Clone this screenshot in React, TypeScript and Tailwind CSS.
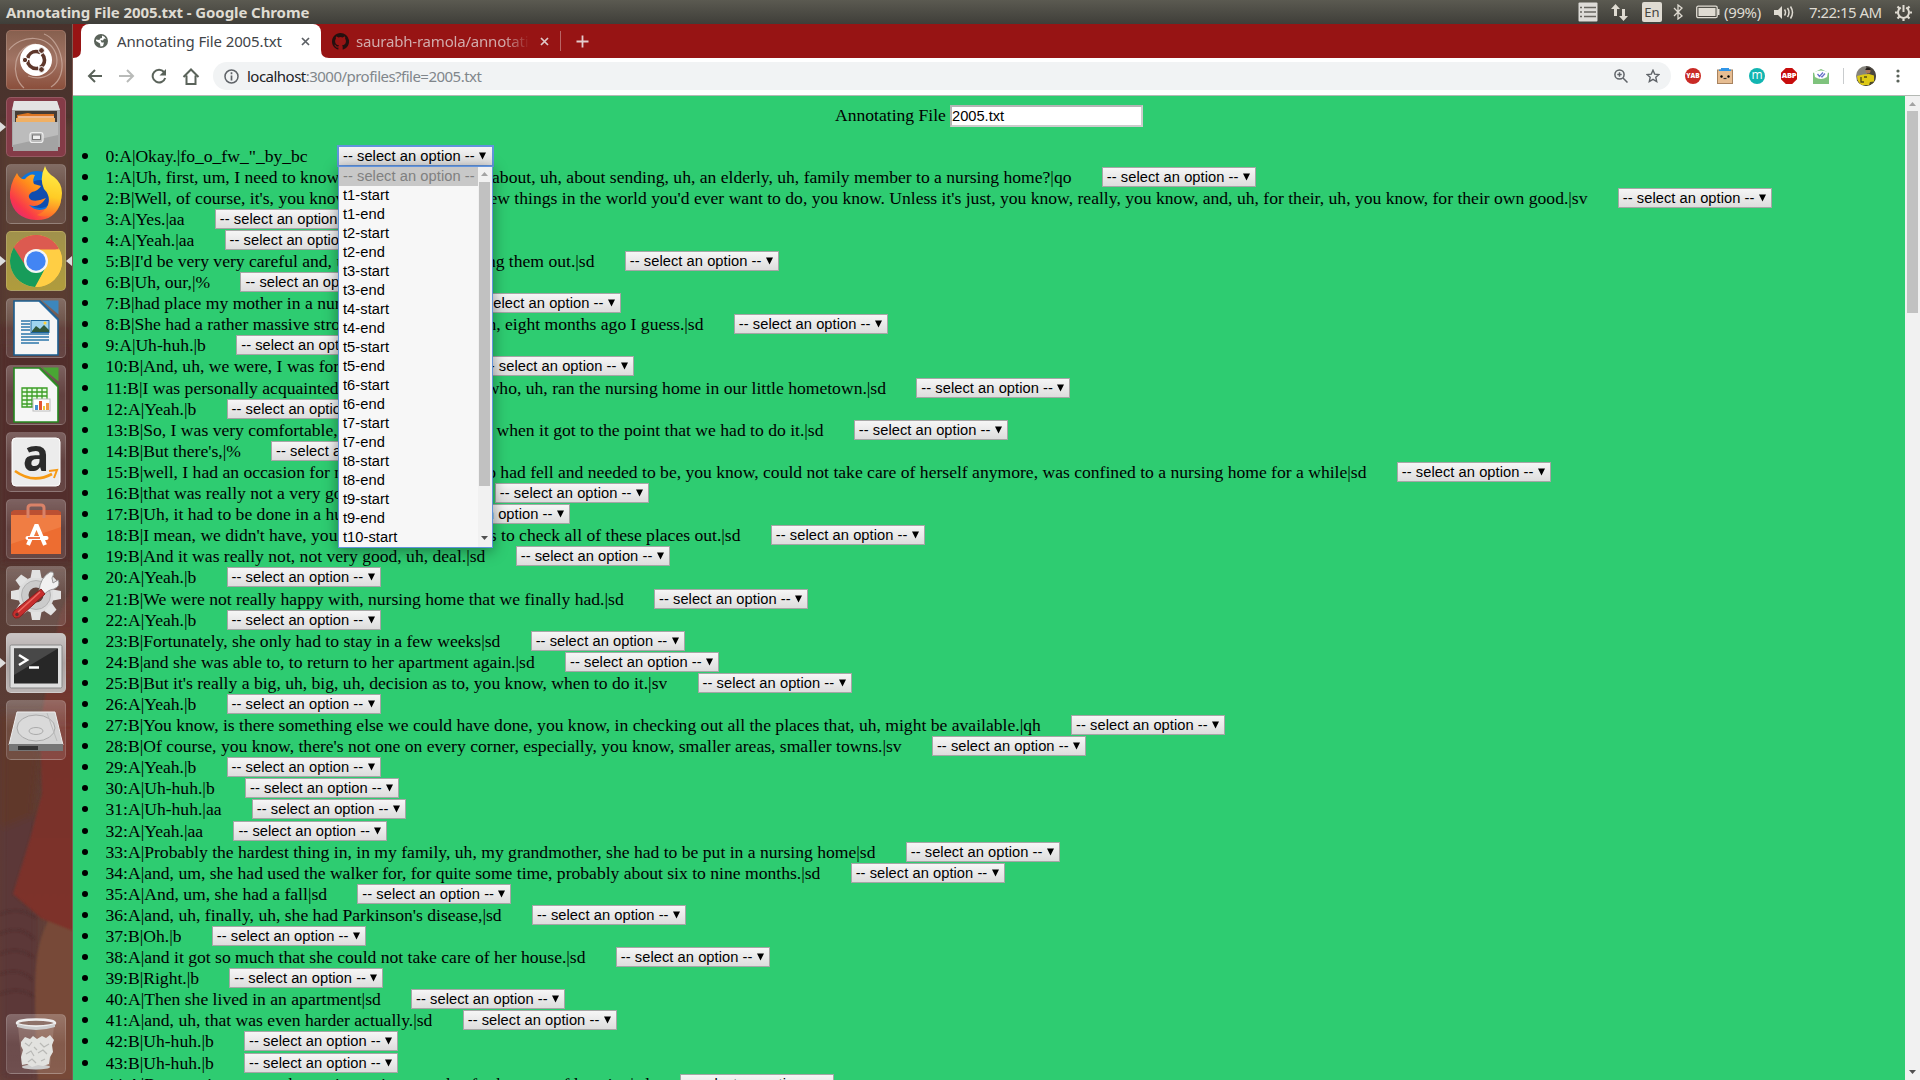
import React from "react";

type Row = { text: string; tail?: string; width?: number };

const rows: Row[] = [
  { text: '0:A|Okay.|fo_o_fw_"_by_bc' },
  { text: "1:A|Uh, first, um, I need to know, uh, how do you feel ", tail: "about, uh, about sending, uh, an elderly, uh, family member to a nursing home?|qo", width: 966 },
  { text: "2:B|Well, of course, it's, you know, one of the last ", tail: "few things in the world you'd ever want to do, you know. Unless it's just, you know, really, you know, and, uh, for their, uh, you know, for their own good.|sv", width: 1482 },
  { text: "3:A|Yes.|aa" },
  { text: "4:A|Yeah.|aa" },
  { text: "5:B|I'd be very very careful and, uh, you know, ", tail: "checking them out.|sd", width: 489 },
  { text: "6:B|Uh, our,|%" },
  { text: "7:B|had place my mother in a nursing home.|sd", tail: "", width: 331 },
  { text: "8:B|She had a rather massive stroke about, uh, ", tail: "uh, eight months ago I guess.|sd", width: 598 },
  { text: "9:A|Uh-huh.|b" },
  { text: "10:B|And, uh, we were, I was fortunate in that|sd", tail: "", width: 344 },
  { text: "11:B|I was personally acquainted with the, uh, ", tail: "who, uh, ran the nursing home in our little hometown.|sd", width: 780.5 },
  { text: "12:A|Yeah.|b" },
  { text: "13:B|So, I was very comfortable, you know, in it ", tail: "when it got to the point that we had to do it.|sd", width: 718 },
  { text: "14:B|But there's,|%" },
  { text: "15:B|well, I had an occasion for my mother-in-law ", tail: "who had fell and needed to be, you know, could not take care of herself anymore, was confined to a nursing home for a while|sd", width: 1261 },
  { text: "16:B|that was really not a very good experience.|sd", tail: "", width: 359 },
  { text: "17:B|Uh, it had to be done in a hurry.|sd", tail: "", width: 280 },
  { text: "18:B|I mean, we didn't have, you know, six ", tail: "months to check all of these places out.|sd", width: 635 },
  { text: "19:B|And it was really not, not very good, uh, deal.|sd" },
  { text: "20:A|Yeah.|b" },
  { text: "21:B|We were not really happy with, nursing home that we finally had.|sd" },
  { text: "22:A|Yeah.|b" },
  { text: "23:B|Fortunately, she only had to stay in a few weeks|sd" },
  { text: "24:B|and she was able to, to return to her apartment again.|sd" },
  { text: "25:B|But it's really a big, uh, big, uh, decision as to, you know, when to do it.|sv" },
  { text: "26:A|Yeah.|b" },
  { text: "27:B|You know, is there something else we could have done, you know, in checking out all the places that, uh, might be available.|qh" },
  { text: "28:B|Of course, you know, there's not one on every corner, especially, you know, smaller areas, smaller towns.|sv" },
  { text: "29:A|Yeah.|b" },
  { text: "30:A|Uh-huh.|b" },
  { text: "31:A|Uh-huh.|aa" },
  { text: "32:A|Yeah.|aa" },
  { text: "33:A|Probably the hardest thing in, in my family, uh, my grandmother, she had to be put in a nursing home|sd" },
  { text: "34:A|and, um, she had used the walker for, for quite some time, probably about six to nine months.|sd" },
  { text: "35:A|And, um, she had a fall|sd" },
  { text: "36:A|and, uh, finally, uh, she had Parkinson's disease,|sd" },
  { text: "37:B|Oh.|b" },
  { text: "38:A|and it got so much that she could not take care of her house.|sd" },
  { text: "39:B|Right.|b" },
  { text: "40:A|Then she lived in an apartment|sd" },
  { text: "41:A|and, uh, that was even harder actually.|sd" },
  { text: "42:B|Uh-huh.|b" },
  { text: "43:B|Uh-huh.|b" },
  { text: "44:A|Because it was, you know, it was just, you know, ", tail: "for her, use of location|sd", width: 544 },
];

const options = Array.from({ length: 10 }, (_, i) => [`t${i + 1}-start`, `t${i + 1}-end`]).flat().slice(0, 19);

function Select({ open }: { open?: boolean }) {
  return (
    <span
      className={
        "relative flex h-[20px] w-[154px] shrink-0 items-center bg-linear-to-b from-[#f6f6f6] to-[#dddddd] font-['Liberation_Sans',sans-serif] text-[14.67px] leading-[18px] tracking-[0.06px] whitespace-nowrap text-black " +
        (open ? "w-[155px] pl-[5px] outline outline-2 -outline-offset-1 outline-[#6294dc]" : "border border-[#a6a6a6] pl-[4px]")
      }
    >
      <span className="w-[136px]">-- select an option --</span>
      <svg width="7" height="8" viewBox="0 0 7 8"><path d="M0 0.5h7L3.5 7.5z" fill="#000" /></svg>
      {open && <Popup />}
    </span>
  );
}

function Popup() {
  return (
    <span className="absolute top-[20px] left-0 z-10 flex h-[382px] w-[155px] border border-[#6294dc] bg-[#f7f7f7] shadow-[0_3px_14px_rgba(0,0,0,0.4)]">
      <span className="flex w-[139px] flex-col whitespace-nowrap">
        <span className="h-[19px] shrink-0 bg-[#c8c8c8] pl-[4px] leading-[19px] text-[#808080]">-- select an option --</span>
        {options.map((o) => (
          <span key={o} className="h-[19px] shrink-0 pl-[4px] leading-[19px]">{o}</span>
        ))}
      </span>
      <span className="flex w-[14px] flex-col items-center bg-[#f1f1f1]">
        <span className="flex h-[15px] items-center"><svg width="7" height="4"><path d="M3.5 0L7 4H0z" fill="#a3a3a3" /></svg></span>
        <span className="h-[304px] w-[11px] bg-[#c1c1c1]" />
        <span className="mt-auto flex h-[17px] items-center"><svg width="7" height="4"><path d="M0 0h7L3.5 4z" fill="#505050" /></svg></span>
      </span>
    </span>
  );
}

function Tile({ bg, left, right, children }: { bg: string; left?: boolean; right?: boolean; children: React.ReactNode }) {
  return (
    <div className={"relative flex h-[60px] w-[60px] shrink-0 items-center justify-center rounded-[5px] border border-white/15 " + bg}>
      {left && <svg className="absolute top-[23px] -left-[7px]" width="6" height="12"><path d="M0 1L6 6L0 11z" fill="#ddd" /></svg>}
      {right && <svg className="absolute top-[23px] -right-[7px]" width="6" height="12"><path d="M6 1L0 6L6 11z" fill="#ddd" /></svg>}
      <svg width="58" height="58" viewBox="1 1 58 58" className="block">{children}</svg>
    </div>
  );
}

const glass = "bg-linear-to-b from-white/25 via-white/10 to-white/12";

function Doc({ c, c2, fold }: { c: string; c2: string; fold: string }) {
  return (
    <>
      <path d="M8 3h26l18 18v36H8z" fill="#f6f6f6" stroke={c} strokeWidth="1.6" />
      <path d="M36 2.5h16.5v14z" fill={fold} />
      <path d="M33 3L52 22" stroke={c2} strokeWidth="1.5" />
    </>
  );
}

function Launcher() {
  return (
    <aside className="relative flex h-[1056px] w-[73px] shrink-0 flex-col gap-[7px] overflow-hidden border-r border-[#805a52] bg-linear-to-b from-[#49322c] via-[#563a33] to-[#67443c] pt-[6px] pl-[6px]">
      <svg className="absolute inset-0" width="73" height="1056">
        <defs>
          <filter id="soft"><feGaussianBlur stdDeviation="4" /></filter>
          <filter id="edge"><feGaussianBlur stdDeviation="1" /></filter>
          <linearGradient id="cloth" x1="0" x2="0" y1="0" y2="1"><stop offset="0" stopColor="#7d3730" stopOpacity="0.3" /><stop offset=".5" stopColor="#78332b" /><stop offset="1" stopColor="#7e3229" /></linearGradient>
        </defs>
        <g filter="url(#soft)">
          <rect x="0" y="100" width="73" height="220" fill="#5f4132" opacity=".6" />
          <rect x="0" y="300" width="73" height="240" fill="#532b28" opacity=".7" />
          <path d="M0 690h45L30 830L0 825z" fill="#60392a" />
          <path d="M0 805l38-16v267H0z" fill="#5b3837" />
        </g>
        <g filter="url(#edge)">
          <path d="M73 560L60 590L40 700L42 770L30 815L13 870L42 895L73 908z" fill="url(#cloth)" />
          <path d="M48 897C32 930 34 960 38 1056H73V907z" fill="#774a38" />
          <path d="M0 890q20-8 36 4M0 910q20-10 34 5M0 930q18-8 33 3M0 950q20-7 33 6M0 970q20-8 35 3" fill="none" stroke="#492c2c" strokeWidth="2" opacity=".5" />
        </g>
      </svg>
      <Tile bg="bg-linear-to-b from-[#87604f] via-[#a17464] to-[#8b4f3c]">
        <path d="M3 20C15 4 43 4 50 24C55 42 38 52 22 46M18 58C3 45 8 15 30 14M45 57C65 45 55 10 38 4" fill="none" stroke="#d2b5a9" strokeWidth="1.2" opacity=".7" />
        <circle cx="30" cy="30" r="16" fill="#fff" />
        <circle cx="30" cy="30" r="8.5" fill="none" stroke="#5e372b" strokeWidth="3.6" strokeDasharray="15.8 2" strokeDashoffset="7" />
        <circle cx="19" cy="30" r="2.7" fill="#5e372b" stroke="#fff" strokeWidth="1" /><circle cx="35.5" cy="20.5" r="2.9" fill="#5e372b" stroke="#fff" strokeWidth="1" /><circle cx="35.5" cy="39.5" r="2.9" fill="#5e372b" stroke="#fff" strokeWidth="1" />
      </Tile>
      <Tile bg="bg-[#843b47]" left>
        <path d="M8 4h43l3 10v36H6V14z" fill="#a9a9a9" /><path d="M8 4h43l3 9H6z" fill="#e3e3e3" />
        <rect x="9" y="14" width="42" height="12" fill="#453c35" /><path d="M11 18l11-2 4 1h22v10H11z" fill="#dd7623" /><path d="M10 21h39v6H10z" fill="#f0b064" /><path d="M12 20h36" stroke="#fff" strokeWidth="1" />
        <rect x="7" y="25" width="45" height="29" fill="#a3a3a3" /><path d="M7 25h45v13L7 48z" fill="#bcbcbc" />
        <rect x="24" y="35.500" width="13" height="10" rx="2.5" fill="#bbb" stroke="#eee" strokeWidth="1.2" /><rect x="26.500" y="38" width="8" height="4.500" fill="#eee" stroke="#777" />
      </Tile>
      <Tile bg={glass}>
        <defs>
          <linearGradient id="fx" x1="1" y1="0" x2="0" y2="1"><stop offset="0" stopColor="#ffe42e" /><stop offset=".45" stopColor="#ff8b1b" /><stop offset=".75" stopColor="#f9374b" /><stop offset="1" stopColor="#d5208d" /></linearGradient>
          <linearGradient id="fy" x1=".5" y1="0" x2=".4" y2="1"><stop offset="0" stopColor="#fff14a" /><stop offset=".6" stopColor="#ffcb25" /><stop offset="1" stopColor="#ff6d2a" /></linearGradient>
        </defs>
        <circle cx="31" cy="28" r="21" fill="#0d75dc" /><circle cx="34" cy="30" r="14" fill="#123c9b" opacity=".7" />
        <path d="M11 9Q14 16 19 15Q24 9 29 11Q26 16 28 20L35 22Q32 27 26 28Q20 32 25 36Q31 38 40 34Q33 45 23 41Q31 49 41 44Q54 34 45 20Q58 28 54 41Q47 57 30 56Q8 55 4 34Q3 21 11 9z" fill="url(#fx)" />
        <path d="M39 2Q33 15 38 25Q45 32 42 41Q39 48 31 51Q47 57 54 40Q60 22 48 13Q41 9 39 2z" fill="url(#fy)" />
      </Tile>
      <Tile bg="bg-linear-to-b from-[#a0914c] to-[#b09c3c]" left right>
        <circle cx="30" cy="30" r="26" fill="#ffce44" />
        <path d="M30 30L7.500 17A26 26 0 0 1 52.500 17z" fill="#dc5648" /><path d="M30 18.500H53A26 26 0 0 0 7.500 17L20 36z" fill="#dc5a50" />
        <path d="M20 35.500L7.800 16.500A26 26 0 0 0 29 56L40 36z" fill="#179c5a" />
        <path d="M30 56A26 26 0 0 0 53.500 18.500H30L40 36z" fill="#ffce44" />
        <circle cx="30" cy="30" r="12" fill="#f5f5f5" /><circle cx="30" cy="30" r="9.700" fill="#4285f4" />
      </Tile>
      <Tile bg={glass}>
        <Doc c="#1b5d8e" c2="#2469a0" fold="#3c87bd" />
        <path d="M15 23h9M15 26h9M15 29h9M15 32h9M15 36h28M15 39h28M15 42h28M15 45h18" stroke="#2d77aa" strokeWidth="1.3" />
        <rect x="25" y="22.500" width="18" height="12" fill="#9fd4ef" stroke="#1e649b" /><path d="M26 33l4-5 4 3 4-4 5 5v2H26z" fill="#31583c" /><circle cx="39" cy="25" r="1.5" fill="#ffd23a" />
      </Tile>
      <Tile bg={glass}>
        <Doc c="#24881e" c2="#32922a" fold="#49a634" />
        <rect x="16" y="23" width="25" height="19" fill="#eaf9e4" /><path d="M16 23h25v19H16zM16 27h25M16 31h25M16 35h25M16 39h25M21 23v19M26 23v19M31 23v19M36 23v19" fill="none" stroke="#3b9d25" strokeWidth="1.300" />
        <rect x="27" y="34" width="17" height="12" fill="#fff" stroke="#bbb" /><path d="M29 45v-5h3v5z" fill="#4a8ed0" /><path d="M33 45v-9h3v9z" fill="#e45632" /><path d="M37 45v-4h2v4z" fill="#efca36" /><path d="M40 45v-7h3v7z" fill="#ef9b45" />
      </Tile>
      <Tile bg={glass}>
        <rect x="6" y="6" width="48" height="48" rx="4" fill="#ececec" stroke="#fff" />
        <text x="30" y="38.500" textAnchor="middle" fontFamily="Open Sans" fontWeight="700" fontSize="44" fill="#2b2b2b">a</text>
        <path d="M9 39Q27 52 46 42" fill="none" stroke="#f79a13" strokeWidth="2.600" /><path d="M43 39l8-1-3 8" fill="none" stroke="#f79a13" strokeWidth="2" />
      </Tile>
      <Tile bg={glass}>
        <path d="M5 13l3-2h44l3 2v6H5z" fill="#bb5032" /><rect x="5" y="16" width="50" height="39" fill="#ed6d31" /><path d="M5 16h50v12L5 45z" fill="#f18850" opacity=".6" />
        <path d="M22 19V9q0-3 3-3h10q3 0 3 3v10" fill="none" stroke="#d98268" strokeWidth="3" />
        <path d="M22 46l8-19h1l8 19" fill="none" stroke="#fff" strokeWidth="4" /><path d="M21.500 39h19" stroke="#fff" strokeWidth="4" strokeLinecap="round" /><path d="M22 39h12" stroke="#e95520" strokeWidth="1.6" />
      </Tile>
      <Tile bg={glass}>
        <circle cx="30" cy="29" r="18" fill="#dcdcdc" />
        {[0, 45, 90, 135, 180, 225, 270, 315].map((a) => (
          <path key={a} d="M24.500 12L26 4h8l1.500 8z" fill="#e2e2e2" transform={`rotate(${a} 30 29)`} />
        ))}
        <circle cx="30" cy="29" r="14.500" fill="#cbcbcb" stroke="#b2b2b2" /><circle cx="30" cy="29" r="7.500" fill="#5d4039" />
        <path d="M33 25Q34 12 44 6Q50 5 46 12L47 17L52 14Q55 20 48 23Q41 24 37 30z" fill="#f1f1f1" stroke="#999" />
        <path d="M35 23L8 45Q5 49 9 52Q13 53 16 49L39 28z" fill="#c72d2d" stroke="#872020" /><path d="M34 26L12 46" stroke="#ed6a62" strokeWidth="1.500" /><circle cx="11" cy="48.500" r="1.700" fill="#5c3030" />
      </Tile>
      <Tile bg="bg-linear-to-b from-[#c9c4c4] via-[#aaa2a1] to-[#bbb5b4]" left>
        <rect x="4" y="12" width="52" height="43" rx="1.500" fill="#dedede" stroke="#888" /><rect x="8" y="15.500" width="44" height="35" fill="#272727" /><path d="M8 15.500h44L8 42z" fill="#484848" />
        <path d="M13 22l8 5-8 5" fill="none" stroke="#fff" strokeWidth="2.500" /><path d="M23 34.500h10" stroke="#fff" strokeWidth="2.500" />
      </Tile>
      <Tile bg={glass}>
        <path d="M11 12h38l8 33H3z" fill="#d2d2d2" stroke="#eee" /><path d="M3 44h54v7H3z" fill="#767676" /><path d="M12 46h20v4H12z" fill="#333" />
        <ellipse cx="30" cy="28" rx="19" ry="13" fill="#dadada" stroke="#aaa" /><ellipse cx="30" cy="31" rx="7" ry="3.500" fill="none" stroke="#aaa" /><path d="M41 13L51 41" stroke="#bbb" />
      </Tile>
      <div className="mt-auto mb-[6px] h-[60px]">
        <Tile bg={glass}>
          <path d="M12 12l4 41h28l4-41z" fill="#b99e92" opacity=".35" /><ellipse cx="30" cy="53" rx="14" ry="2.500" fill="#ccc" />
          <path d="M15 28l4-5 5 2 3-3 4 3 5-3 4 2 4-3 4 5-2 5 1 7-3 5-1 7-6 2-5-1-6 2-5-3-5 1-1-8 2-7-2-4z" fill="#e2e2df" />
          <path d="M19 29l4 3 3-4M34 29l4 4 5-3M20 40l5-3 3 5M32 39l5-3 4 4M22 48l4-3 4 4M35 47l4-2M28 33l3 3" fill="none" stroke="#b9b9b6" strokeWidth="1.200" />
          <ellipse cx="30" cy="9" rx="19" ry="3.500" fill="#8e7269" stroke="#eee" strokeWidth="2.500" /><path d="M11 10v3q19 6 38 0v-3q-19 6-38 0" fill="#cdcdcd" />
        </Tile>
      </div>
    </aside>
  );
}

function TitleBar() {
  return (
    <header className="flex h-[24px] items-center justify-between bg-linear-to-b from-[#5b5a51] to-[#3f3e39] text-[#dfdbd2]">
      <span className="pl-[6px] font-['Noto_Sans',sans-serif] text-[15px] leading-[23px] font-bold tracking-[-0.09px] whitespace-nowrap">Annotating File 2005.txt - Google Chrome</span>
      <div className="flex items-center font-['Noto_Sans',sans-serif] text-[15px] leading-[23px]">
        <svg width="20" height="20" viewBox="0 0 20 20"><rect x="0.500" y="0.500" width="19" height="19" rx="1" fill="#dedcd8" /><path d="M2 5.500h2M2 10h2M2 14.500h2M6 5.500h12M6 10h12M6 14.500h12" stroke="#686660" strokeWidth="1.700" /></svg>
        <svg className="ml-[13px]" width="17" height="17" viewBox="0 0 17 17" fill="#dfdbd2"><path d="M4.500 0l4.500 5H6v7H3V5H0zM12.500 17L8 12h3V5h3v7h3z" /></svg>
        <span className="ml-[14px] flex h-[20px] w-[20px] items-center justify-center rounded-[2px] bg-[#dfdbd2] text-[13px] text-[#45443f]">En</span>
        <svg className="ml-[11px]" width="10" height="16" viewBox="0 0 10 16" fill="none" stroke="#dfdbd2" strokeWidth="1.300"><path d="M1 4l8 8-4 3V1l4 3-8 8" /></svg>
        <svg className="ml-[13px]" width="24" height="14" viewBox="0 0 24 14"><rect x="0.700" y="1.200" width="20.500" height="11.500" rx="1.500" fill="none" stroke="#dfdbd2" strokeWidth="1.300" /><rect x="2.500" y="3" width="17" height="8" fill="#dfdbd2" /><path d="M22.500 4v6" stroke="#dfdbd2" strokeWidth="2" /></svg>
        <span className="ml-[4px] w-[39px] tracking-[-0.35px] whitespace-nowrap">(99%)</span>
        <svg className="ml-[11px]" width="20" height="15" viewBox="0 0 20 15"><path d="M0 5h4l4-4v13l-4-4H0z" fill="#dfdbd2" /><path d="M10.500 4.500q2 3 0 6M13.500 3q3 4.500 0 9M16.500 1.500q4 6 0 12" fill="none" stroke="#dfdbd2" strokeWidth="1.500" /></svg>
        <span className="ml-[15px] w-[76px] tracking-[-0.55px] whitespace-nowrap">7:22:15 AM</span>
        <svg className="mr-[8px] ml-[10px]" width="17" height="17" viewBox="0 0 17 17" fill="none" stroke="#dfdbd2"><path d="M5.800 3.600a5.500 5.500 0 1 0 5.400 0" strokeWidth="2" /><path d="M8.500 1v7" strokeWidth="2" /><path d="M0 8.500h2.500M14.500 8.500H17M8.500 14.500V17M2.500 2.500l2 2M14.500 2.500l-2 2M2.500 14.500l2-2M14.500 14.500l-2-2" strokeWidth="2.200" /></svg>
      </div>
    </header>
  );
}

const X = ({ c }: { c: string }) => (
  <svg width="9" height="9" viewBox="0 0 9 9" className="shrink-0"><path d="M1 1l7 7M8 1L1 8" stroke={c} strokeWidth="1.700" /></svg>
);

function Tabs() {
  return (
    <div className="flex h-[34px] items-center bg-[#971414] font-['Noto_Sans',sans-serif] text-[15px]">
      <svg className="self-end" width="8" height="8"><path d="M8 0v8H0Q8 8 8 0z" fill="#fff" /></svg>
      <div className="flex h-[34px] w-[240px] shrink-0 items-center rounded-t-[8px] bg-white pl-[13px]">
        <svg width="14" height="14" viewBox="0 0 14 14"><circle cx="7" cy="7" r="7" fill="#5a635a" /><path d="M8 1.500Q11 2 12 5L10 4.500L9 6.500L6.500 6L7.500 8.500H10L9 12L6.500 12.500L6 9.500L2 7V5.500L5.500 6L6 4.500L8 4z" fill="#fff" /></svg>
        <span className="ml-[9px] w-[168px] leading-[32px] tracking-[-0.12px] whitespace-nowrap text-[#3f4448]">Annotating File 2005.txt</span>
        <span className="ml-[16px] flex"><X c="#5c6065" /></span>
      </div>
      <svg className="self-end" width="8" height="8"><path d="M0 0v8H8Q0 8 0 0z" fill="#fff" /></svg>
      <svg className="ml-[3px]" width="17" height="17" viewBox="0 0 16 16"><path fill="#24100f" d="M8 0C3.580 0 0 3.580 0 8c0 3.540 2.290 6.530 5.470 7.590.4.070.55-.17.55-.38v-1.490c-2.010.37-2.530-.49-2.690-.94-.09-.23-.48-.94-.82-1.130-.28-.15-.68-.52-.01-.53.63-.01 1.080.58 1.230.82.72 1.210 1.870.87 2.330.66.070-.52.28-.87.51-1.070-1.780-.2-3.640-.89-3.640-3.950 0-.87.31-1.590.82-2.150-.08-.2-.36-1.020.08-2.120 0 0 .67-.21 2.200.82a7.600 7.600 0 0 1 4 0c1.530-1.040 2.200-.82 2.200-.82.44 1.100.16 1.920.08 2.120.51.56.82 1.270.82 2.150 0 3.070-1.870 3.750-3.650 3.950.29.25.54.73.54 1.480v2.200c0 .21.150.46.550.38A8 8 0 0 0 8 0z" /></svg>
      <span className="ml-[7px] w-[174px] overflow-hidden mask-r-from-85% leading-[32px] tracking-[-0.2px] whitespace-nowrap text-[#d2abab]">saurabh-ramola/annotati</span>
      <span className="ml-[10px] flex"><X c="#e0c8c8" /></span>
      <span className="ml-[11px] h-[20px] w-px bg-[#b96565]" />
      <svg className="ml-[15px]" width="13" height="13"><path d="M6.500 0.500v12M0.500 6.500h12" stroke="#e4cccc" strokeWidth="1.800" /></svg>
    </div>
  );
}

function Toolbar() {
  return (
    <div className="flex h-[38px] items-center border-b border-[#b4b9b4] bg-white pb-px pl-[14px]">
      <svg width="16" height="14" viewBox="0 0 16 14" fill="none" stroke="#5a635a" strokeWidth="2"><path d="M15 7H2M8 1L2 7l6 6" /></svg>
      <svg className="ml-[16px]" width="16" height="14" viewBox="0 0 16 14" fill="none" stroke="#b9bbb9" strokeWidth="2"><path d="M0 7h13M8 1l6 6-6 6" /></svg>
      <svg className="ml-[16px]" width="16" height="16" viewBox="0 0 16 16"><path d="M13 4A6.400 6.400 0 1 0 14.200 10" fill="none" stroke="#5a635a" strokeWidth="2" /><path d="M15 1v6.500H8.500z" fill="#5a635a" /></svg>
      <svg className="ml-[15px]" width="18" height="17" viewBox="0 0 18 17" fill="none" stroke="#5a635a" strokeWidth="2"><path d="M1.500 9L9 1.500L16.500 9M4.500 7.500V16h9V7.500" /></svg>
      <div className="ml-[13px] flex h-[28px] w-[1458px] items-center rounded-full bg-[#f1f3f4] pl-[11px] font-['Noto_Sans',sans-serif] text-[15px]">
        <svg width="15" height="15" viewBox="0 0 15 15" fill="none" stroke="#5f6368"><circle cx="7.500" cy="7.500" r="6.500" strokeWidth="1.500" /><path d="M7.500 6.500v5M7.500 3.300v1.900" strokeWidth="1.700" /></svg>
        <span className="ml-[8px] leading-[26px] tracking-[-0.52px] whitespace-nowrap text-[#202124]">localhost<span className="text-[#80868b]">:3000/profiles?file=2005.txt</span></span>
        <svg className="ml-auto" width="14" height="14" viewBox="0 0 14 14" fill="none" stroke="#5f6368" strokeWidth="1.500"><circle cx="5.500" cy="5.500" r="4.600" /><path d="M9 9l4.500 4.500M3.300 5.500h4.400M5.500 3.300v4.400" /></svg>
        <svg className="mr-[11px] ml-[18px]" width="14" height="14" viewBox="0 0 14 14" fill="none" stroke="#5f6368" strokeWidth="1.400"><path d="M7 1.200l1.700 3.900 4.300.4-3.200 2.800.9 4.200L7 10.300l-3.700 2.200.9-4.200L1 5.500l4.300-.4z" /></svg>
      </div>
      <div className="ml-[14px] flex items-center gap-[16px] font-['Open_Sans',sans-serif] font-extrabold text-white">
        <span className="flex h-[16px] w-[16px] items-center justify-center rounded-full bg-[#c92a25] text-[6.5px]">YAB</span>
        <svg width="16" height="16" viewBox="0 0 16 16"><rect x="0.500" y="2" width="15" height="13.500" fill="#e6bd92" stroke="#a8835f" /><path d="M4 0h8v1.500h2V3H2V1.500h2z" fill="#2f95e8" /><circle cx="4.500" cy="8.500" r="1.200" /><circle cx="11.500" cy="8.500" r="1.200" /><path d="M6.500 10.500h3" stroke="#333" strokeWidth="1.200" /></svg>
        <span className="flex h-[16px] w-[16px] items-center justify-center rounded-full bg-[#12b5b1] pb-[2px] text-[12px] font-normal">m</span>
        <span className="flex h-[16px] w-[16px] items-center justify-center bg-[#c70d0d] text-[7.5px] tracking-[-0.3px] [clip-path:polygon(30%_0,70%_0,100%_30%,100%_70%,70%_100%,30%_100%,0_70%,0_30%)]">ABP</span>
        <svg width="16" height="15" viewBox="0 0 16 15"><path d="M0 4l8-4 8 4v11H0z" fill="#7fc37d" /><path d="M1 3Q8 0 15 3L14 8Q8 12 2 8z" fill="#fff" /><path d="M4.500 5l2 2.500L10 3.500M8 7.500l1 .500L12 4.500" fill="none" stroke="#6973c9" strokeWidth="1.300" /></svg>
      </div>
      <span className="ml-[14px] h-[16px] w-px bg-[#c9ccce]" />
      <svg className="ml-[12px]" width="20" height="20" viewBox="0 0 20 20"><defs><clipPath id="av"><circle cx="10" cy="10" r="10" /></clipPath></defs><g clipPath="url(#av)"><path d="M0 0h20v20H0z" fill="#85837c" /><path d="M10 0h10v20H13z" fill="#4b4740" /><path d="M0 14h20v6H0z" fill="#4d4a2c" /><circle cx="12" cy="5" r="2.500" fill="#a8775b" /><path d="M9.500 3q2.500-3 5 0v1h-5z" fill="#221d1a" /><path d="M1 10l6-1.500 6-.5 5 1.500v6l-4 .5-1 3H5L2 15z" fill="#ddc916" /><path d="M5 11v5h3M8 11h3" stroke="#514b1a" fill="none" strokeWidth="1.300" /></g></svg>
      <svg className="ml-[20px]" width="4" height="14" fill="#5a635a"><circle cx="2" cy="2" r="1.600" /><circle cx="2" cy="7" r="1.600" /><circle cx="2" cy="12" r="1.600" /></svg>
    </div>
  );
}

export default function App() {
  return (
    <div className="h-[1080px] w-[1920px] overflow-hidden bg-[#2ecc71]">
      <TitleBar />
      <div className="flex">
        <Launcher />
        <div className="flex h-[1056px] w-[1847px] flex-col">
          <Tabs />
          <Toolbar />
          <div className="flex h-[984px]">
            <main className="h-[984px] w-[1832px] overflow-hidden bg-[#2ecc71] pt-[9px] font-['Liberation_Serif',serif] text-[17.6px] text-black">
              <div className="flex h-[22px] items-center justify-center">
                <span className="w-[115px] pb-[2px] leading-[20px] whitespace-nowrap">Annotating File</span>
                <span className="flex h-[22px] w-[193px] items-center border-2 border-[#b5b5b5] border-r-[#ccc] border-b-[#ccc] bg-white font-['Liberation_Sans',sans-serif] text-[14.67px]">2005.txt</span>
              </div>
              <ul className="mt-[18px]">
                {rows.map((r, i) => (
                  <li key={i} className="flex h-[21.1px] items-center pl-[9px]">
                    <span className="h-[6px] w-[6px] shrink-0 rounded-full bg-black" />
                    <span className="ml-[17.5px] flex shrink-0 justify-between overflow-hidden leading-[20px] whitespace-pre" style={{ width: r.width }}>
                      <span className="min-w-0 overflow-hidden">{r.text}</span>
                      {r.tail && <span className="shrink-0">{r.tail}</span>}
                    </span>
                    <span className="ml-[30.3px] flex"><Select open={i === 0} /></span>
                  </li>
                ))}
              </ul>
            </main>
            <div className="flex w-[15px] flex-col items-center bg-[#f1f1f1]">
              <span className="flex h-[15px] items-center"><svg width="7" height="4"><path d="M3.500 0L7 4H0z" fill="#a3a3a3" /></svg></span>
              <span className="h-[202px] w-[11px] bg-[#c1c1c1]" />
              <span className="mt-auto flex h-[17px] items-center"><svg width="7" height="4"><path d="M0 0h7L3.500 4z" fill="#505050" /></svg></span>
            </div>
          </div>
        </div>
      </div>
    </div>
  );
}
